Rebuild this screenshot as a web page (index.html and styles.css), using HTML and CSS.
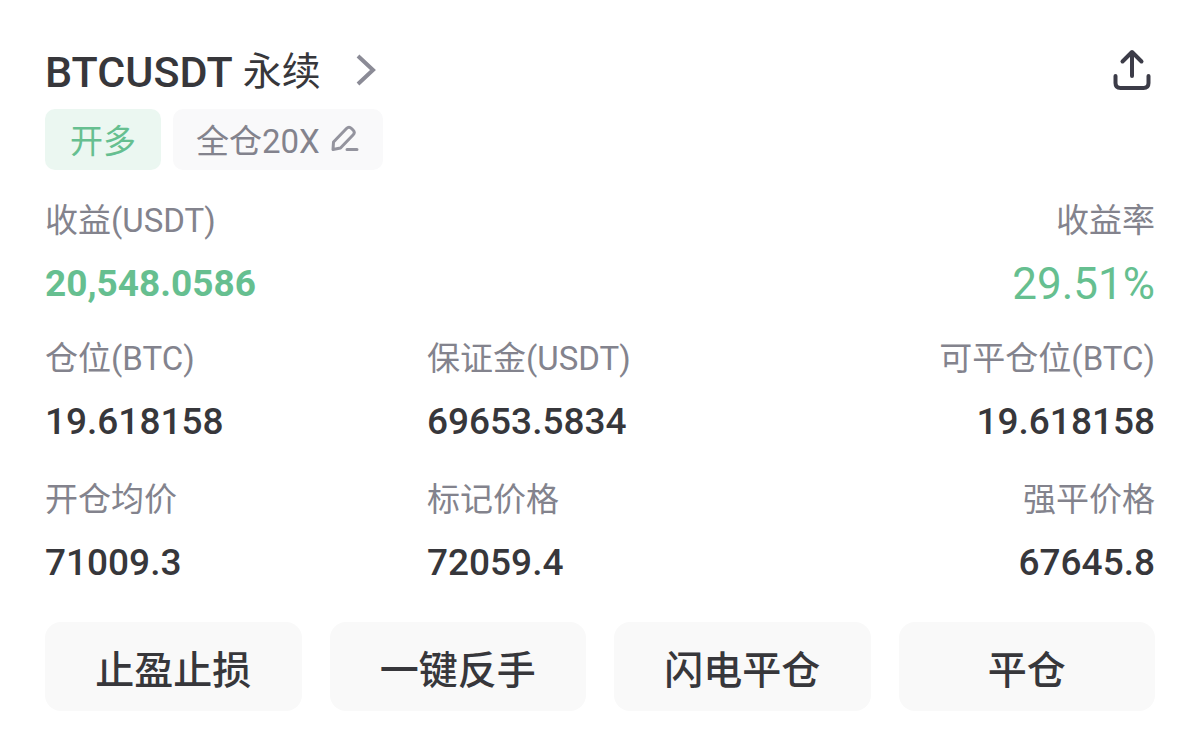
FILE: index.html
```html
<!DOCTYPE html>
<html lang="zh-CN">
<head>
    <meta charset="UTF-8">
    <meta name="viewport" content="width=device-width, initial-scale=1.0">
    <title>BTCUSDT 永续</title>
    <link rel="stylesheet" href="styles.css">
</head>
<body>
    <main class="position">
        <header class="header">
            <h1><a class="pair" href="#"><span class="symbol">BTCUSDT</span><span class="contract">永续</span>
                <svg class="arrow" viewBox="0 0 20 32" aria-hidden="true"><path d="M2 2 L17 16 L2 30"/></svg></a></h1>
            <button class="share" type="button" aria-label="分享">
                <svg viewBox="0 0 40 42" aria-hidden="true"><path d="M20 27V4M10.500 12.500L20 3L29.500 12.500M3.500 27V34Q3.500 39 8.500 39H31.500Q36.500 39 36.500 34V27"/></svg>
            </button>
        </header>

        <div class="tags">
            <span class="tag tag-long">开多</span>
            <button class="tag tag-leverage" type="button">全仓20X
                <svg viewBox="0 0 30 30" aria-hidden="true"><path d="M3 25.500L3.500 18L16.500 4.500Q19 2 21.500 4.500L23 6Q25.500 8.500 23 11L10.500 24ZM17 25.500H27"/></svg>
            </button>
        </div>

        <dl class="profit">
            <div class="item">
                <dt>收益(USDT)</dt>
                <dd class="green total">20,548.0586</dd>
            </div>
            <div class="item right">
                <dt>收益率</dt>
                <dd class="green rate">29.51%</dd>
            </div>
        </dl>

        <dl class="details">
            <div class="item">
                <dt>仓位(BTC)</dt>
                <dd>19.618158</dd>
            </div>
            <div class="item">
                <dt>保证金(USDT)</dt>
                <dd>69653.5834</dd>
            </div>
            <div class="item right">
                <dt>可平仓位(BTC)</dt>
                <dd>19.618158</dd>
            </div>
            <div class="item">
                <dt>开仓均价</dt>
                <dd>71009.3</dd>
            </div>
            <div class="item">
                <dt>标记价格</dt>
                <dd>72059.4</dd>
            </div>
            <div class="item right">
                <dt>强平价格</dt>
                <dd>67645.8</dd>
            </div>
        </dl>

        <div class="actions">
            <button type="button">止盈止损</button>
            <button type="button">一键反手</button>
            <button type="button">闪电平仓</button>
            <button type="button">平仓</button>
        </div>
    </main>
</body>
</html>
```

FILE: styles.css
```css
* {
    margin: 0;
    padding: 0;
    box-sizing: border-box;
}

body {
    background: #fff;
    color: #37373b;
    font-family: Roboto, 'Noto Sans CJK SC', sans-serif;
}

button {
    border: none;
    font-family: inherit;
    color: inherit;
    cursor: pointer;
}

svg {
    fill: none;
    stroke: currentColor;
}

.position {
    padding: 40px 45px 26px;
}

.header {
    display: flex;
    justify-content: space-between;
    align-items: center;
    height: 60px;
}

.pair {
    display: flex;
    align-items: center;
    color: inherit;
    text-decoration: none;
    line-height: 60px;
}

.symbol,
.contract {
    padding-top: 4px;
}

.symbol {
    font-size: 43px;
    font-weight: 500;
}

.contract {
    margin-left: 10px;
    font-size: 39px;
    font-weight: 400;
}

.arrow {
    width: 20px;
    height: 32px;
    margin-left: 35px;
    color: #8b8b96;
    stroke-width: 4;
}

.share {
    background: none;
    padding: 0 3px 0 0;
    color: #3c3c48;
}

.share svg {
    display: block;
    width: 40px;
    height: 42px;
    stroke-width: 4;
    stroke-linecap: round;
    stroke-linejoin: round;
}

.tags {
    display: flex;
    gap: 12px;
    margin-top: 9px;
}

.tag {
    display: flex;
    align-items: center;
    height: 61px;
    padding: 0 25px 2px;
    border-radius: 10px;
    font-size: 33px;
}

.tag-long {
    background: #ebf7f1;
    color: #66bf90;
}

.tag-leverage {
    padding: 0 23px 2px;
    background: #f9f9fa;
    color: #83838d;
}

.tag-leverage svg {
    width: 30px;
    height: 30px;
    margin-left: 10px;
    color: #94949e;
    stroke-width: 3;
    stroke-linecap: round;
    stroke-linejoin: round;
}

.profit {
    display: flex;
    justify-content: space-between;
    margin-top: 27px;
}

.details {
    display: grid;
    grid-template-columns: 382px 1fr 1fr;
    row-gap: 28px;
    margin-top: 25px;
}

.right {
    text-align: right;
}

dt {
    color: #83838d;
    font-size: 33px;
    line-height: 48px;
}

dd {
    margin-top: 13px;
    font-size: 37px;
    font-weight: 500;
    line-height: 52px;
}

.green {
    color: #66bf90;
}

.total {
    font-weight: 700;
}

.rate {
    font-size: 44px;
    font-weight: 400;
}

.actions {
    display: grid;
    grid-template-columns: repeat(4, 1fr);
    gap: 28px;
    margin-top: 33px;
}

.actions button {
    height: 89px;
    border-radius: 16px;
    background: #f9f9f9;
    font-size: 39px;
    font-weight: 500;
}
```
